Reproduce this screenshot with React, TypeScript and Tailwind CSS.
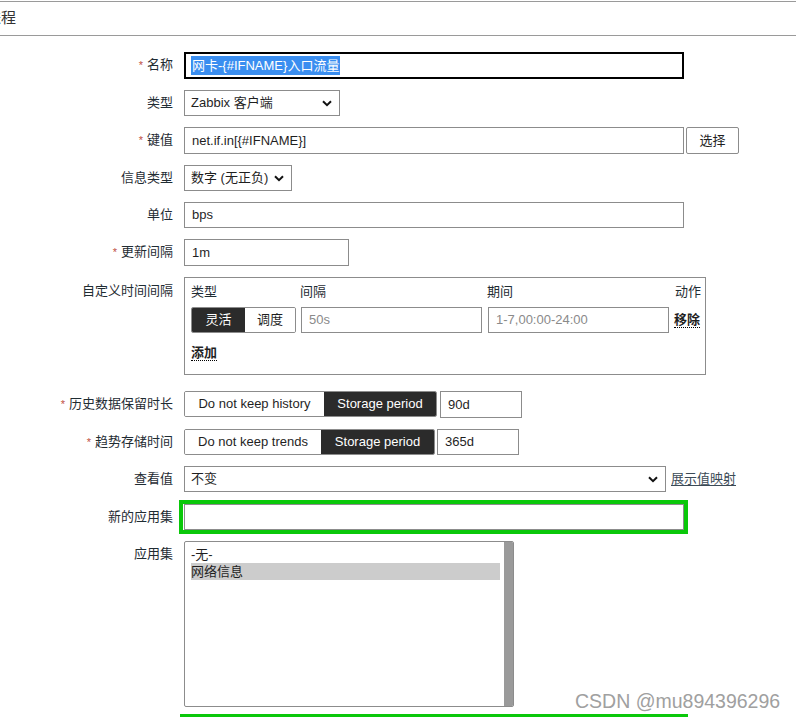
import React from "react";

const font = {
  fontFamily: '"Liberation Sans", Arial, "Noto Sans CJK SC", sans-serif',
};

function Chevron() {
  return (
    <svg width="10" height="7" viewBox="0 0 10 7" className="shrink-0">
      <path d="M1 1.2 L5 5.2 L9 1.2" fill="none" stroke="#111" strokeWidth="2" />
    </svg>
  );
}

function Row({
  label,
  req,
  labelPad = "pt-[5px]",
  className = "",
  children,
}: {
  label: string;
  req?: boolean;
  labelPad?: string;
  className?: string;
  children: React.ReactNode;
}) {
  return (
    <div className={`flex ${className}`}>
      <div className={`w-[173px] shrink-0 text-right text-[13px] leading-[16px] text-[#1f2c33] ${labelPad}`}>
        {req && <span className="mr-[4px] text-[11px] text-[#c0503f]">*</span>}
        {label}
      </div>
      <div className="ml-[11px] flex items-start">{children}</div>
    </div>
  );
}

function Box({ w, h = "h-[26px]", children, muted }: { w: string; h?: string; children?: React.ReactNode; muted?: boolean }) {
  return (
    <div
      className={`${w} ${h} flex items-center border border-[#8c8c8c] bg-white pl-[7px] text-[13px] ${
        muted ? "text-[#8a8a8a]" : "text-[#1f1f1f]"
      }`}
    >
      {children}
    </div>
  );
}

function Select({ w, h = "h-[26px]", children }: { w: string; h?: string; children: React.ReactNode }) {
  return (
    <div className={`${w} ${h} flex items-center justify-between border border-[#8c8c8c] bg-white pl-[6px] pr-[7px] text-[13px] text-[#1f1f1f]`}>
      <span>{children}</span>
      <Chevron />
    </div>
  );
}

function Toggle({ left, right, lw, rw }: { left: string; right: string; lw: string; rw: string }) {
  return (
    <div className="flex h-[26px] overflow-hidden rounded-[2px] border border-[#8c8c8c] text-[13px]">
      <div className={`${lw} flex items-center justify-center bg-white text-[#1f1f1f]`}>{left}</div>
      <div className={`${rw} flex items-center justify-center bg-[#2b2b2b] text-white`}>{right}</div>
    </div>
  );
}

export default function App() {
  return (
    <div className="relative h-[717px] overflow-hidden bg-white pt-px" style={font}>
      {/* Header */}
      <div className="flex h-[35px] items-center border-y border-[#9a9a9a] text-[15px] text-[#333]">
        <span className="ml-[-14px]">进程</span>
      </div>

      <div className="mt-[16px] flex flex-col">
        <Row label="名称" req>
          <div className="flex h-[27px] w-[500px] items-center border-2 border-black pl-[5px] text-[13px]">
            <span className="bg-[#3a8ef0] px-[1px] leading-[19px] text-white">网卡-{"{#IFNAME}"}入口流量</span>
          </div>
        </Row>

        <Row label="类型" className="mt-[11px]">
          <Select w="w-[156px]">Zabbix 客户端</Select>
        </Row>

        <Row label="键值" req className="mt-[11px]">
          <Box w="w-[500px]" h="h-[27px]">net.if.in[{"{#IFNAME}"}]</Box>
          <div className="ml-[2px] flex h-[27px] w-[53px] items-center justify-center rounded-[2px] border border-[#8c8c8c] bg-white text-[13px] text-[#1f1f1f]">
            选择
          </div>
        </Row>

        <Row label="信息类型" className="mt-[11px]">
          <Select w="w-[108px]">数字 (无正负)</Select>
        </Row>

        <Row label="单位" className="mt-[11px]">
          <Box w="w-[500px]">bps</Box>
        </Row>

        <Row label="更新间隔" req className="mt-[11px]">
          <Box w="w-[165px]" h="h-[27px]">1m</Box>
        </Row>

        <Row label="自定义时间间隔" className="mt-[11px]" labelPad="pt-[6px]">
          <div className="h-[98px] w-[522px] border border-[#8c8c8c] pl-[6px] pr-[4px] pt-[6px] text-[13px] text-[#1f2c33]">
            <div className="flex leading-[16px]">
              <div className="w-[109px]">类型</div>
              <div className="w-[187px]">间隔</div>
              <div className="w-[186px]">期间</div>
              <div className="flex-1 text-right">动作</div>
            </div>
            <div className="mt-[7px] flex items-center">
              <div className="flex h-[26px] overflow-hidden rounded-[2px] border border-[#8c8c8c]">
                <div className="flex w-[53px] items-center justify-center bg-[#2b2b2b] text-white">灵活</div>
                <div className="flex w-[50px] items-center justify-center bg-white text-[#1f1f1f]">调度</div>
              </div>
              <div className="ml-[5px]">
                <Box w="w-[181px]" muted>50s</Box>
              </div>
              <div className="ml-[6px]">
                <Box w="w-[181px]" muted>1-7,00:00-24:00</Box>
              </div>
              <div className="ml-[5px] whitespace-nowrap border-b border-dotted border-black font-bold leading-[15px] text-[#1f1f1f]">
                移除
              </div>
            </div>
            <div className="mt-[12px] inline-block border-b border-dotted border-black font-bold leading-[15px] text-[#1f1f1f]">
              添加
            </div>
          </div>
        </Row>

        <Row label="历史数据保留时长" req className="mt-[16px]">
          <Toggle left="Do not keep history" right="Storage period" lw="w-[139px]" rw="w-[112px]" />
          <div className="ml-[3px]">
            <Box w="w-[82px]" h="h-[27px]">90d</Box>
          </div>
        </Row>

        <Row label="趋势存储时间" req className="mt-[11px]">
          <Toggle left="Do not keep trends" right="Storage period" lw="w-[136px]" rw="w-[113px]" />
          <div className="ml-[2px]">
            <Box w="w-[82px]">365d</Box>
          </div>
        </Row>

        <Row label="查看值" className="mt-[11px]">
          <Select w="w-[482px]">不变</Select>
          <span className="ml-[5px] mt-[5px] text-[13px] leading-[16px] text-[#3b4a56] underline underline-offset-2">
            展示值映射
          </span>
        </Row>

        <Row label="新的应用集" className="mt-[12px]">
          <div className="relative">
            <Box w="w-[500px]" />
            <div className="pointer-events-none absolute -left-[5px] -top-[4px] h-[34px] w-[509px] border-4 border-[#0ac80a]" />
          </div>
        </Row>

        <Row label="应用集" className="mt-[11px]">
          <div className="flex h-[166px] w-[330px] overflow-hidden rounded-[2px] border border-[#8c8c8c] bg-white text-[13px] text-[#1f1f1f]">
            <div className="flex-1 pl-[6px] pr-[4px] pt-[4px] leading-[17px]">
              <div>-无-</div>
              <div className="bg-[#cccccc]">网络信息</div>
            </div>
            <div className="w-[9px] bg-[#9a9a9a]" />
          </div>
        </Row>

        <div className="ml-[180px] mt-[7px] h-[4px] w-[508px] shrink-0 bg-[#0ac80a]" />
      </div>

      {/* watermark */}
      <div className="absolute left-[575px] top-[690px] text-[19.5px] leading-[22px] text-[#a0a0a0]">
        CSDN @mu894396296
      </div>
    </div>
  );
}
